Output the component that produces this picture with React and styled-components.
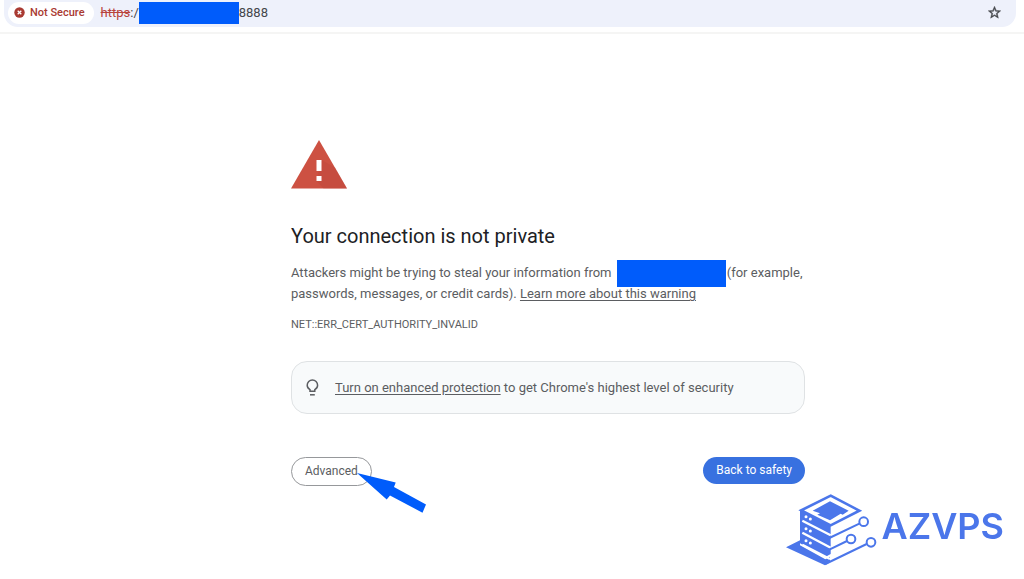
import styled, { createGlobalStyle } from 'styled-components';

const GlobalStyle = createGlobalStyle`
  * {
    box-sizing: border-box;
  }

  body {
    margin: 0;
    background: #fff;
    color: #5b5d61;
    font-family: Roboto, 'Liberation Sans', sans-serif;
    font-size: 13px;
    line-height: 21px;
  }

  a {
    color: inherit;
    text-underline-offset: 2px;
  }

  button {
    font: inherit;
    cursor: pointer;
  }
`;

const StyledToolbar = styled.header`
  padding: 0 8px 5px 4px;
  border-bottom: 2px solid #f5f5f4;
`;

const StyledAddressBar = styled.div`
  height: 27px;
  display: flex;
  align-items: center;
  padding: 0 14px 2px 4px;
  border-radius: 0 0 14px 14px;
  background: #eef1fb;
`;

const StyledSecurityChip = styled.button`
  height: 22px;
  display: flex;
  align-items: center;
  gap: 5px;
  padding: 0 9px 0 6px;
  border: 0;
  border-radius: 11px;
  background: #fff;
  color: #a93a32;

  span {
    font-size: 11px;
    font-weight: 500;
  }
`;

const StyledUrl = styled.div`
  flex: 1;
  display: flex;
  align-items: center;
  margin-left: 7px;
  font-size: 13px;
  color: #45474b;

  s {
    color: #b9433c;
  }
`;

const StyledStarButton = styled.button`
  display: flex;
  padding: 0;
  border: 0;
  background: none;
  color: #45474b;
`;

const StyledRedaction = styled.span`
  display: inline-block;
  width: ${({ $width }) => $width}px;
  height: ${({ $height }) => $height}px;
  margin: ${({ $inText }) => ($inText ? '-8px 1px -8px 2px' : '0')};
  vertical-align: middle;
  background: #005cfb;
`;

const StyledMain = styled.main`
  max-width: 586px;
  margin: 0 auto;
  padding: 106px 0 48px 72px;

  h1 {
    margin: 33px 0 12px;
    font-size: 20px;
    font-weight: 400;
    line-height: 28px;
    color: #202124;
  }

  p {
    margin: 0;
  }
`;

const StyledWarningIcon = styled.svg`
  display: block;
  width: 56px;
  height: 49px;
`;

const StyledErrorCode = styled.div`
  margin-top: 10px;
  font-size: 11px;
`;

const StyledPromo = styled.div`
  display: flex;
  align-items: center;
  gap: 14px;
  margin-top: 26px;
  padding: 15px 13px;
  border: 1px solid #dfe2e4;
  border-radius: 16px;
  background: #f8fafb;

  svg {
    flex: none;
  }
`;

const StyledActions = styled.div`
  display: flex;
  justify-content: space-between;
  align-items: flex-start;
  margin-top: 43px;
`;

const StyledButton = styled.button`
  height: ${({ $primary }) => ($primary ? 27 : 29)}px;
  padding: 0 13px;
  border: ${({ $primary }) => ($primary ? '0' : '1px solid #96989b')};
  border-radius: 15px;
  background: ${({ $primary }) => ($primary ? '#3871e0' : '#fff')};
  color: ${({ $primary }) => ($primary ? '#fff' : '#5b5d61')};
  font-size: 12px;
`;

const StyledPointerAnchor = styled.div`
  position: relative;
  display: flex;
`;

const StyledArrow = styled.svg`
  position: absolute;
  top: 16px;
  left: 66px;
  pointer-events: none;
`;

const StyledBrand = styled.div`
  position: fixed;
  right: 20px;
  bottom: 7px;
  display: flex;
  align-items: flex-start;
  color: #4b76ea;
  font-family: Inter, 'Liberation Sans', sans-serif;
  font-size: 36px;
  font-weight: 600;
  line-height: 76px;

  svg {
    margin-right: -9px;
  }
`;

const NotSecureIcon = () => (
  <svg width="11" height="11" viewBox="0 0 11 11" aria-hidden="true">
    <circle cx="5.5" cy="5.5" r="5.2" fill="#a93a32" />
    <path d="M3.7 3.7l3.6 3.6M7.3 3.7L3.7 7.3" stroke="#fff" strokeWidth="1.3" />
  </svg>
);

const StarIcon = () => (
  <svg width="15" height="15" viewBox="0 0 24 24" fill="currentColor" stroke="currentColor" strokeWidth="0.7" aria-hidden="true">
    <path d="M22 9.24l-7.19-.62L12 2 9.19 8.63 2 9.24l5.46 4.73L5.82 21 12 17.27 18.18 21l-1.63-7.03L22 9.24zM12 15.4l-3.76 2.27 1-4.28-3.32-2.88 4.38-.38L12 6.1l1.71 4.04 4.38.38-3.32 2.88 1 4.28L12 15.4z" />
  </svg>
);

const WarningIcon = () => (
  <StyledWarningIcon viewBox="0 0 56 49" aria-hidden="true">
    <path d="M28 0L56 48.5H0z" fill="#cd5142" />
    <path d="M30.5 20l13.5 7.5 12 21H32.5l-7-7.5z" fill="#b94639" opacity="0.35" />
    <path d="M25.5 20h5v11h-5zM25.5 36h5v5h-5z" fill="#fff" />
  </StyledWarningIcon>
);

const BulbIcon = () => (
  <svg width="16" height="20" viewBox="0 0 16 20" fill="none" stroke="#5b5d61" strokeWidth="1.5" aria-hidden="true">
    <path d="M5 13.2V11.7C3.2 10.6 2.2 9 2.2 7.2a5.2 5.2 0 0 1 10.4 0c0 1.8-1 3.4-2.8 4.5v1.5z" />
    <path d="M5 16.8h4.8" />
  </svg>
);

const PointerArrow = () => (
  <StyledArrow width="70" height="41" viewBox="0 0 70 41" aria-hidden="true">
    <path d="M0 0L38.7 9.5 37 14 69 31.5 65.5 39.7 33 22.5 29.7 26.6z" fill="#005cfb" />
  </StyledArrow>
);

// isometric server stack with three circuit traces
const ServerLogo = () => (
  <svg width="110" height="84" viewBox="0 0 330 252" fill="none" aria-hidden="true">
    <path d="M18 178L60 157V172L136 214 150 206V223L135 232z" fill="currentColor" />
    <path d="M60 66L152 114V198L136 207 60 166z" fill="currentColor" />
    <path d="M152 23L238 68 152 112 64 67z" fill="#fff" stroke="currentColor" strokeWidth="8" />
    <path d="M150 40L206 68 188 80 182 77 150 97 112 80 120 76 98 68z" fill="currentColor" />
    <path d="M67 98L152 142M67 134L152 179M67 170L150 213" stroke="#fff" strokeWidth="7" />
    <path d="M78 86h.1M91 93h.1M78 122h.1M91 129h.1M78 158h.1M91 165h.1" stroke="#fff" strokeWidth="9" strokeLinecap="round" />
    <g stroke="currentColor" strokeWidth="6">
      <path d="M148 150L238 107M148 185L201 159M136 228L260 168" />
      <circle cx="251" cy="101" r="13" />
      <circle cx="213" cy="153" r="13" />
      <circle cx="273" cy="163" r="13" />
    </g>
  </svg>
);

const Toolbar = () => (
  <StyledToolbar>
    <StyledAddressBar>
      <StyledSecurityChip type="button">
        <NotSecureIcon />
        <span>Not Secure</span>
      </StyledSecurityChip>
      <StyledUrl>
        <s>https</s>:/
        <StyledRedaction $width={100} $height={22} />
        8888
      </StyledUrl>
      <StyledStarButton type="button" aria-label="Bookmark this tab">
        <StarIcon />
      </StyledStarButton>
    </StyledAddressBar>
  </StyledToolbar>
);

const App = () => {
  return (
    <>
      <GlobalStyle />
      <Toolbar />
      <StyledMain>
        <WarningIcon />
        <h1>Your connection is not private</h1>
        <p>
          Attackers might be trying to steal your information from{' '}
          <StyledRedaction $width={109} $height={27} $inText />
          (for example, passwords, messages, or credit cards).{' '}
          <a href="#learn-more">Learn more about this warning</a>
        </p>
        <StyledErrorCode>NET::ERR_CERT_AUTHORITY_INVALID</StyledErrorCode>
        <StyledPromo>
          <BulbIcon />
          <p>
            <a href="#enhanced-protection">Turn on enhanced protection</a> to get Chrome's highest level of security
          </p>
        </StyledPromo>
        <StyledActions>
          <StyledPointerAnchor>
            <StyledButton type="button">Advanced</StyledButton>
            <PointerArrow />
          </StyledPointerAnchor>
          <StyledButton type="button" $primary>Back to safety</StyledButton>
        </StyledActions>
      </StyledMain>
      <StyledBrand>
        <ServerLogo />
        <span>AZVPS</span>
      </StyledBrand>
    </>
  );
};

export default App;
